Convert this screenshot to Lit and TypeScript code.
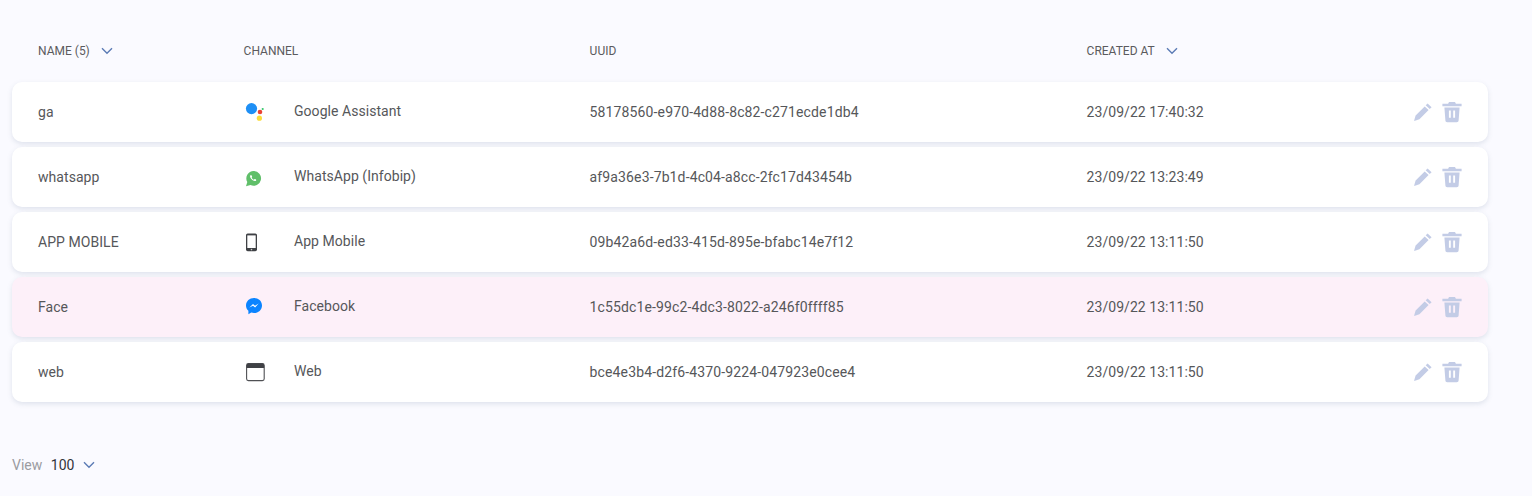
import { LitElement, html, css, svg } from "lit";
import { customElement } from "lit/decorators.js";

const chevron = html`<svg class="chev" width="12" height="8" viewBox="0 0 12 8"><path d="M1 1.2 6 6.2 11 1.2" fill="none" stroke="#5b7bb5" stroke-width="1.4"/></svg>`;

const icons: Record<string, unknown> = {
  ga: svg`<circle cx="7.5" cy="5.6" r="5.6" fill="#1e8ff5"/><circle cx="16" cy="9" r="2.3" fill="#ea4335"/><circle cx="15.4" cy="15.2" r="2.6" fill="#fbdc3a"/><circle cx="18.7" cy="6" r="1.1" fill="#34c76a"/>`,
  wa: svg`<path d="M9.6 3a7.4 7.4 0 0 0-6.3 11.1L2 18.3l4.5-1.2A7.4 7.4 0 1 0 9.6 3z" fill="#60bf6a"/><path d="M7 6.9c-.3 0-.8.4-.9 1-.2 1 .4 2.3 1.5 3.4 1.2 1.2 2.5 1.9 3.5 1.7.7-.1 1.2-.7 1.2-1.1 0-.2-1.3-.9-1.6-.9-.2 0-.5.6-.8.7-.5 0-2.1-1.4-2.2-2-.1-.3.5-.6.5-.9 0-.3-.7-1.9-1.2-1.9z" fill="#fff"/>`,
  app: svg`<rect x="2" y=".4" width="11" height="17.8" rx="1.7" fill="#3f4145"/><rect x="3.3" y="2.4" width="8.4" height="12.6" fill="#fff"/><circle cx="7.5" cy="16.6" r=".8" fill="#c8c8c8"/>`,
  fb: svg`<path d="M10 0C5.6 0 2 3.2 2 7.4c0 2.2.9 4.1 2.4 5.4v3.4l2.9-1.6c.8.2 1.7.4 2.7.4 4.4 0 8-3.2 8-7.6S14.4 0 10 0z" fill="#0b84ff"/><path d="M5.4 9.6 9 5.9l2 1.8 3.6-2.1-3.5 3.9-2.1-1.8z" fill="#fff"/>`,
  web: svg`<rect x="2.6" y=".6" width="17.6" height="17" rx="1.8" fill="#fff" stroke="#4f5054" stroke-width="1.1"/><path d="M2.6 2.4A1.8 1.8 0 0 1 4.4.6h14a1.8 1.8 0 0 1 1.8 1.8v2.6H2.6z" fill="#3f4145"/>`,
};

const rows = [
  { name: "ga", icon: "ga", channel: "Google Assistant", uuid: "58178560-e970-4d88-8c82-c271ecde1db4", at: "23/09/22 17:40:32" },
  { name: "whatsapp", icon: "wa", channel: "WhatsApp (Infobip)", uuid: "af9a36e3-7b1d-4c04-a8cc-2fc17d43454b", at: "23/09/22 13:23:49" },
  { name: "APP MOBILE", icon: "app", channel: "App Mobile", uuid: "09b42a6d-ed33-415d-895e-bfabc14e7f12", at: "23/09/22 13:11:50" },
  { name: "Face", icon: "fb", channel: "Facebook", uuid: "1c55dc1e-99c2-4dc3-8022-a246f0ffff85", at: "23/09/22 13:11:50", hl: true },
  { name: "web", icon: "web", channel: "Web", uuid: "bce4e3b4-d2f6-4370-9224-047923e0cee4", at: "23/09/22 13:11:50" },
];

@customElement("app-root")
export class AppRoot extends LitElement {
  static styles = css`
    :host {
      display: block;
      height: 496px;
      box-sizing: border-box;
      background: #fafaff;
      font-family: Roboto, "Liberation Sans", sans-serif;
      color: #56575a;
      padding: 0 44px 0 12px;
      overflow: hidden;
    }
    .grid {
      display: grid;
      grid-template-columns: 205.6px 346px 497px 1fr auto;
      align-items: center;
      padding-left: 26px;
    }
    .head {
      height: 82px;
      padding-top: 20px;
      box-sizing: border-box;
      font-size: 12px;
      font-weight: 400;
      color: #5a5a5e;
      text-transform: uppercase;
    }
    .head span {
      display: flex;
      align-items: center;
    }
    .chev {
      margin-left: 11px;
    }
    .list {
      display: flex;
      flex-direction: column;
      gap: 5px;
    }
    .row {
      height: 60px;
      background: #fff;
      border-radius: 10px;
      box-shadow: 0 2px 5px rgba(90, 115, 140, 0.17);
      font-size: 14px;
      letter-spacing: 0.05px;
    }
    .row.hl {
      background: #fdf0f9;
    }
    .uuid {
      letter-spacing: 0.13px;
    }
    .channel {
      display: flex;
      align-items: center;
    }
    .channel svg {
      flex: none;
      margin-left: 0.4px;
      margin-right: 28px;
      position: relative;
      top: 1px;
    }
    .channel span {
      position: relative;
      top: -1px;
    }
    .actions {
      display: flex;
      align-items: center;
      gap: 9px;
      padding-right: 26px;
    }
    .foot {
      display: flex;
      align-items: center;
      margin-top: 54px;
      height: 18px;
      font-size: 14px;
    }
    .foot .label {
      color: #9b9ca1;
    }
    .foot .value {
      color: #33343a;
      margin-left: 8.6px;
      letter-spacing: -0.1px;
    }
    .foot .chev {
      margin-left: 9px;
    }
  `;

  render() {
    return html`
      <div class="grid head">
        <span>Name (5) ${chevron}</span>
        <span>Channel</span>
        <span>UUID</span>
        <span>Created at ${chevron}</span>
      </div>
      <div class="list">
        ${rows.map(
          (r) => html`
            <div class="grid row ${r.hl ? "hl" : ""}">
              <div>${r.name}</div>
              <div class="channel">
                <svg width="22" height="20" viewBox="0 0 22 20">${icons[r.icon]}</svg>
                <span>${r.channel}</span>
              </div>
              <div class="uuid">${r.uuid}</div>
              <div>${r.at}</div>
              <div class="actions">
                <svg width="20" height="20" viewBox="0 0 20 20"><path d="M14.6 1.4 18.6 5.2 16.7 7.1 12.7 3.3zM11.7 4.4 15.6 8.1 6.4 17.3 1 18.9 2.6 13.5z" fill="#c3cce6"/></svg>
                <svg width="20" height="22" viewBox="0 0 20 22"><path d="M7 1h6l.9 1.7H19.6v2.6H.4V2.7h5.7zM2.4 6.6h15.2l-1 13c-.1 1-.8 1.7-1.8 1.7H5.2c-1 0-1.7-.7-1.8-1.7zM6.9 9.4v7.4h1.9V9.4zm4.3 0v7.4h1.9V9.4z" fill="#c3cce6" fill-rule="evenodd"/></svg>
              </div>
            </div>
          `,
        )}
      </div>
      <div class="foot">
        <span class="label">View</span>
        <span class="value">100</span>
        ${chevron}
      </div>
    `;
  }
}
